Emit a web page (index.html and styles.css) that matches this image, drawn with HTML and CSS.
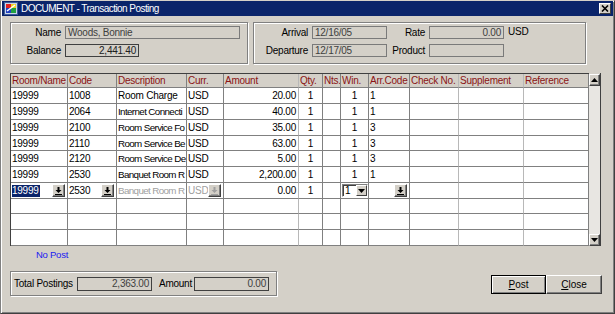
FILE: index.html
```html
<!DOCTYPE html>
<html lang="en">
<head>
    <meta charset="UTF-8">
    <meta name="viewport" content="width=device-width, initial-scale=1.0">
    <title>DOCUMENT - Transaction Posting</title>
    <link rel="stylesheet" href="styles.css">
</head>
<body>
    <div class="window">
        <div class="titlebar">
            <svg class="app-icon" width="14" height="13" viewBox="0 0 14 13">
                <rect x="0.5" y="0.5" width="13" height="12" fill="#c8d4e8" stroke="#3a5a9a"/>
                <rect x="2" y="2" width="10" height="9" fill="#fff"/>
                <rect x="2" y="2" width="5" height="4" fill="#e02020"/>
                <rect x="7" y="2" width="5" height="4" fill="#f0d020"/>
                <rect x="2" y="6" width="5" height="5" fill="#2040c0"/>
                <rect x="7" y="6" width="5" height="5" fill="#20a040"/>
                <path d="M3 9 L11 3" stroke="#fff" stroke-width="1.5"/>
            </svg>
            <span class="title">DOCUMENT - Transaction Posting</span>
            <span class="close-btn">
                <svg width="8" height="7" viewBox="0 0 8 7">
                    <path d="M1 0.5 L7 6.5 M7 0.5 L1 6.5" stroke="#000" stroke-width="1.6"/>
                </svg>
            </span>
        </div>

        <div class="content">
            <div class="header-row">
                <div class="group group-guest">
                    <span class="label">Name</span>
                    <span class="field field-name">Woods, Bonnie</span>
                    <span class="label">Balance</span>
                    <span class="field field-balance num">2,441.40</span>
                </div>
                <div class="group group-stay">
                    <span class="label">Arrival</span>
                    <span class="field">12/16/05</span>
                    <span class="label">Rate</span>
                    <span class="field num">0.00</span>
                    <span class="unit">USD</span>
                    <span class="label">Departure</span>
                    <span class="field">12/17/05</span>
                    <span class="label">Product</span>
                    <span class="field"></span>
                    <span class="unit"></span>
                </div>
            </div>

            <div class="grid-wrap">
                <div class="grid">
                    <div class="hd">Room/Name</div>
                    <div class="hd">Code</div>
                    <div class="hd">Description</div>
                    <div class="hd">Curr.</div>
                    <div class="hd light">Amount</div>
                    <div class="hd light-l">Qty.</div>
                    <div class="hd">Nts.</div>
                    <div class="hd">Win.</div>
                    <div class="hd">Arr.Code</div>
                    <div class="hd light">Check No.</div>
                    <div class="hd light">Supplement</div>
                    <div class="hd">Reference</div>

                    <div class="c">19999</div><div class="c">1008</div><div class="c">Room Charge</div><div class="c">USD</div><div class="c num light">20.00</div><div class="c mid">1</div><div class="c"></div><div class="c mid">1</div><div class="c">1</div><div class="c light"></div><div class="c light"></div><div class="c"></div>
                    <div class="c">19999</div><div class="c">2064</div><div class="c desc">Internet Connecti</div><div class="c">USD</div><div class="c num light">40.00</div><div class="c mid">1</div><div class="c"></div><div class="c mid">1</div><div class="c">1</div><div class="c light"></div><div class="c light"></div><div class="c"></div>
                    <div class="c">19999</div><div class="c">2100</div><div class="c desc">Room Service Fo</div><div class="c">USD</div><div class="c num light">35.00</div><div class="c mid">1</div><div class="c"></div><div class="c mid">1</div><div class="c">3</div><div class="c light"></div><div class="c light"></div><div class="c"></div>
                    <div class="c">19999</div><div class="c">2110</div><div class="c desc">Room Service Be</div><div class="c">USD</div><div class="c num light">63.00</div><div class="c mid">1</div><div class="c"></div><div class="c mid">1</div><div class="c">3</div><div class="c light"></div><div class="c light"></div><div class="c"></div>
                    <div class="c">19999</div><div class="c">2120</div><div class="c desc">Room Service De</div><div class="c">USD</div><div class="c num light">5.00</div><div class="c mid">1</div><div class="c"></div><div class="c mid">1</div><div class="c">3</div><div class="c light"></div><div class="c light"></div><div class="c"></div>
                    <div class="c">19999</div><div class="c">2530</div><div class="c desc">Banquet Room R</div><div class="c">USD</div><div class="c num light">2,200.00</div><div class="c mid">1</div><div class="c"></div><div class="c mid">1</div><div class="c">1</div><div class="c light"></div><div class="c light"></div><div class="c"></div>

                    <div class="c edit"><span class="selected">19999</span><span class="lov"><svg width="7" height="8" viewBox="0 0 7 8"><path d="M2.5 0h2v3h2l-3 3-3-3h2z M0 7h7v1H0z" fill="#000"/></svg></span></div>
                    <div class="c edit"><span>2530</span><span class="lov"><svg width="7" height="8" viewBox="0 0 7 8"><path d="M2.5 0h2v3h2l-3 3-3-3h2z M0 7h7v1H0z" fill="#000"/></svg></span></div>
                    <div class="c desc dim">Banquet Room R</div>
                    <div class="c edit dim"><span>USD</span><span class="lov off"><svg width="7" height="8" viewBox="0 0 7 8"><path d="M2.5 0h2v3h2l-3 3-3-3h2z M0 7h7v1H0z" fill="#a0a0a0"/></svg></span></div>
                    <div class="c num light">0.00</div>
                    <div class="c mid">1</div>
                    <div class="c"></div>
                    <div class="c"><span class="combo"><span class="combo-val">1</span><span class="combo-btn"><svg width="7" height="4" viewBox="0 0 7 4"><path d="M0 0h7l-3.5 4z" fill="#000"/></svg></span></span></div>
                    <div class="c edit end"><span class="lov"><svg width="7" height="8" viewBox="0 0 7 8"><path d="M2.5 0h2v3h2l-3 3-3-3h2z M0 7h7v1H0z" fill="#000"/></svg></span></div>
                    <div class="c light"></div><div class="c light"></div><div class="c"></div>

                    <div class="c"></div><div class="c"></div><div class="c"></div><div class="c"></div><div class="c light"></div><div class="c"></div><div class="c"></div><div class="c"></div><div class="c"></div><div class="c light"></div><div class="c light"></div><div class="c"></div>
                    <div class="c"></div><div class="c"></div><div class="c"></div><div class="c"></div><div class="c light"></div><div class="c"></div><div class="c"></div><div class="c"></div><div class="c"></div><div class="c light"></div><div class="c light"></div><div class="c"></div>
                    <div class="c"></div><div class="c"></div><div class="c"></div><div class="c"></div><div class="c light"></div><div class="c"></div><div class="c"></div><div class="c"></div><div class="c"></div><div class="c light"></div><div class="c light"></div><div class="c"></div>
                </div>
                <div class="vscroll">
                    <span class="sbtn"><svg width="7" height="4" viewBox="0 0 7 4"><path d="M3.5 0L7 4H0z" fill="#000"/></svg></span>
                    <span class="track"></span>
                    <span class="sbtn"><svg width="7" height="4" viewBox="0 0 7 4"><path d="M0 0h7l-3.5 4z" fill="#000"/></svg></span>
                </div>
            </div>

            <div class="status">No Post</div>

            <div class="footer">
                <div class="group group-total">
                    <span class="label-total">Total Postings</span>
                    <span class="field num">2,363.00</span>
                    <span class="label-amount">Amount</span>
                    <span class="field num">0.00</span>
                </div>
                <div class="buttons">
                    <button class="btn default"><u>P</u>ost</button>
                    <button class="btn"><u>C</u>lose</button>
                </div>
            </div>
        </div>
    </div>
</body>
</html>
```

FILE: styles.css
```css
* {
    box-sizing: border-box;
}

body {
    margin: 0;
    font-family: "Liberation Sans", Arial, sans-serif;
    font-size: 10px;
    letter-spacing: -0.25px;
    color: #000;
    background-color: #d4d0c8;
}

.window {
    width: 615px;
    height: 314px;
    display: flex;
    flex-direction: column;
    background-color: #d4d0c8;
    border: 1px solid;
    border-color: #d4d0c8 #404040 #404040 #808080;
    box-shadow: inset 1px 1px 0 #fff, inset -1px -1px 0 #808080;
}

.titlebar {
    height: 15px;
    margin: 0 1px;
    display: flex;
    align-items: center;
    background-color: #0a246a;
    color: #fff;
}

.app-icon {
    margin-left: 2px;
    margin-right: 3px;
}

.title {
    font-size: 10px;
    letter-spacing: -0.55px;
}

.close-btn {
    margin-left: auto;
    margin-right: 2px;
    width: 12px;
    height: 11px;
    display: flex;
    align-items: center;
    justify-content: center;
    background-color: #d4d0c8;
    border: 1px solid;
    border-color: #fff #404040 #404040 #fff;
}

.content {
    flex: 1;
    display: flex;
    flex-direction: column;
    padding: 6px 12px 0 9px;
}

/* group boxes */
.header-row {
    display: flex;
    gap: 5px;
}

.group {
    border: 1px solid #808080;
    box-shadow: inset 1px 1px 0 #fff, 1px 1px 0 #fff;
}

.group-guest {
    width: 238px;
    height: 42px;
    display: grid;
    grid-template-columns: 50px 175px;
    grid-auto-rows: 13px;
    column-gap: 4px;
    row-gap: 5px;
    padding-top: 3px;
    align-content: start;
}

.group-stay {
    width: 333px;
    height: 42px;
    display: grid;
    grid-template-columns: 54px 75px 34px 75px auto;
    grid-auto-rows: 13px;
    column-gap: 4px;
    row-gap: 5px;
    padding-top: 3px;
    align-content: start;
}

.label {
    text-align: right;
    line-height: 13px;
    color: #000;
}

.unit {
    line-height: 11px;
}

.field {
    height: 13px;
    line-height: 11px;
    padding: 0 2px;
    border: 1px solid #7a7a7a;
    color: #404040;
    white-space: nowrap;
    overflow: hidden;
}

.field-balance {
    width: 74px;
    border-color: #404040;
    color: #202020;
}

.num {
    text-align: right;
}

/* posting grid */
.grid-wrap {
    margin-top: 9px;
    display: flex;
    width: 591px;
}

.grid {
    display: grid;
    grid-template-columns: 57px 49px 70px 37px 75px 24px 18px 28px 41px 49px 65px 65px;
    grid-template-rows: 14px 16px 16px 16px 15px 16px 16px 16px 15px 16px 16px;
    border-top: 1px solid #404040;
    border-left: 1px solid #404040;
    background-color: #fff;
}

.hd,
.c {
    border-right: 1px solid #808080;
    border-bottom: 1px solid #808080;
    white-space: nowrap;
    overflow: hidden;
    padding: 0 1px;
}

.hd {
    background-color: #d4d0c8;
    color: #8b1414;
    line-height: 13px;
}

.c {
    line-height: 15px;
}

/* cut-off descriptions squeezed to fit the column */
.c.desc {
    font-size: 9.8px;
    letter-spacing: -0.62px;
    padding: 0 0 0 1px;
}

.hd.light,
.c.light {
    border-right-color: #b8b8b8;
}

.c.num {
    padding-right: 2px;
}

.c.mid {
    text-align: center;
}

.c.dim {
    color: #a0a0a0;
}

.c.edit {
    display: flex;
    align-items: center;
    justify-content: space-between;
    padding-right: 2px;
}

.c.edit.end {
    justify-content: flex-end;
}

.selected {
    background-color: #0a246a;
    color: #fff;
    line-height: 12px;
    padding-right: 1px;
}

.lov {
    width: 13px;
    height: 13px;
    display: flex;
    align-items: center;
    justify-content: center;
    background-color: #d4d0c8;
    border: 1px solid;
    border-color: #fff #404040 #404040 #fff;
    box-shadow: inset -1px -1px 0 #808080;
}

.combo {
    margin-top: 1px;
    width: 26px;
    height: 13px;
    display: flex;
    border: 1px solid;
    border-color: #808080 #fff #fff #808080;
    box-shadow: inset 1px 1px 0 #404040;
    background-color: #fff;
}

.combo-val {
    flex: 1;
    padding-left: 2px;
    line-height: 11px;
}

.combo-btn {
    width: 11px;
    display: flex;
    align-items: center;
    justify-content: center;
    background-color: #d4d0c8;
    border: 1px solid;
    border-color: #fff #404040 #404040 #fff;
}

.vscroll {
    width: 12px;
    display: flex;
    flex-direction: column;
    padding-top: 1px;
    border-right: 1px solid #404040;
}

.sbtn {
    height: 12px;
    display: flex;
    align-items: center;
    justify-content: center;
    background-color: #d4d0c8;
    border: 1px solid;
    border-color: #fff #404040 #404040 #fff;
    box-shadow: inset -1px -1px 0 #808080;
}

.track {
    flex: 1;
    background-color: #e8e6e2;
}

.status {
    height: 12px;
    margin-top: 3px;
    padding-left: 26px;
    color: #1a1af0;
    font-size: 9.5px;
    line-height: 12px;
}

/* totals and buttons */
.footer {
    margin-top: 10px;
    display: flex;
    align-items: flex-start;
}

.group-total {
    width: 267px;
    height: 25px;
    display: flex;
    align-items: center;
    padding-left: 3px;
}

.label-total {
    width: 63px;
}

.label-amount {
    width: 35px;
    margin-left: 7px;
}

.group-total .field {
    width: 75px;
    height: 14px;
    line-height: 12px;
    border-color: #404040;
}

.buttons {
    margin-left: auto;
    margin-top: 4px;
    display: flex;
}

.btn {
    width: 56px;
    height: 19px;
    padding: 0;
    font-family: "Liberation Sans", Arial, sans-serif;
    font-size: 10px;
    letter-spacing: 0;
    color: #000;
    background-color: #d4d0c8;
    border: 1px solid;
    border-color: #fff #404040 #404040 #fff;
    box-shadow: inset -1px -1px 0 #808080;
}

.btn.default {
    width: 55px;
    border-color: #000;
    box-shadow: inset 1px 1px 0 #fff, inset -1px -1px 0 #808080;
}
```
